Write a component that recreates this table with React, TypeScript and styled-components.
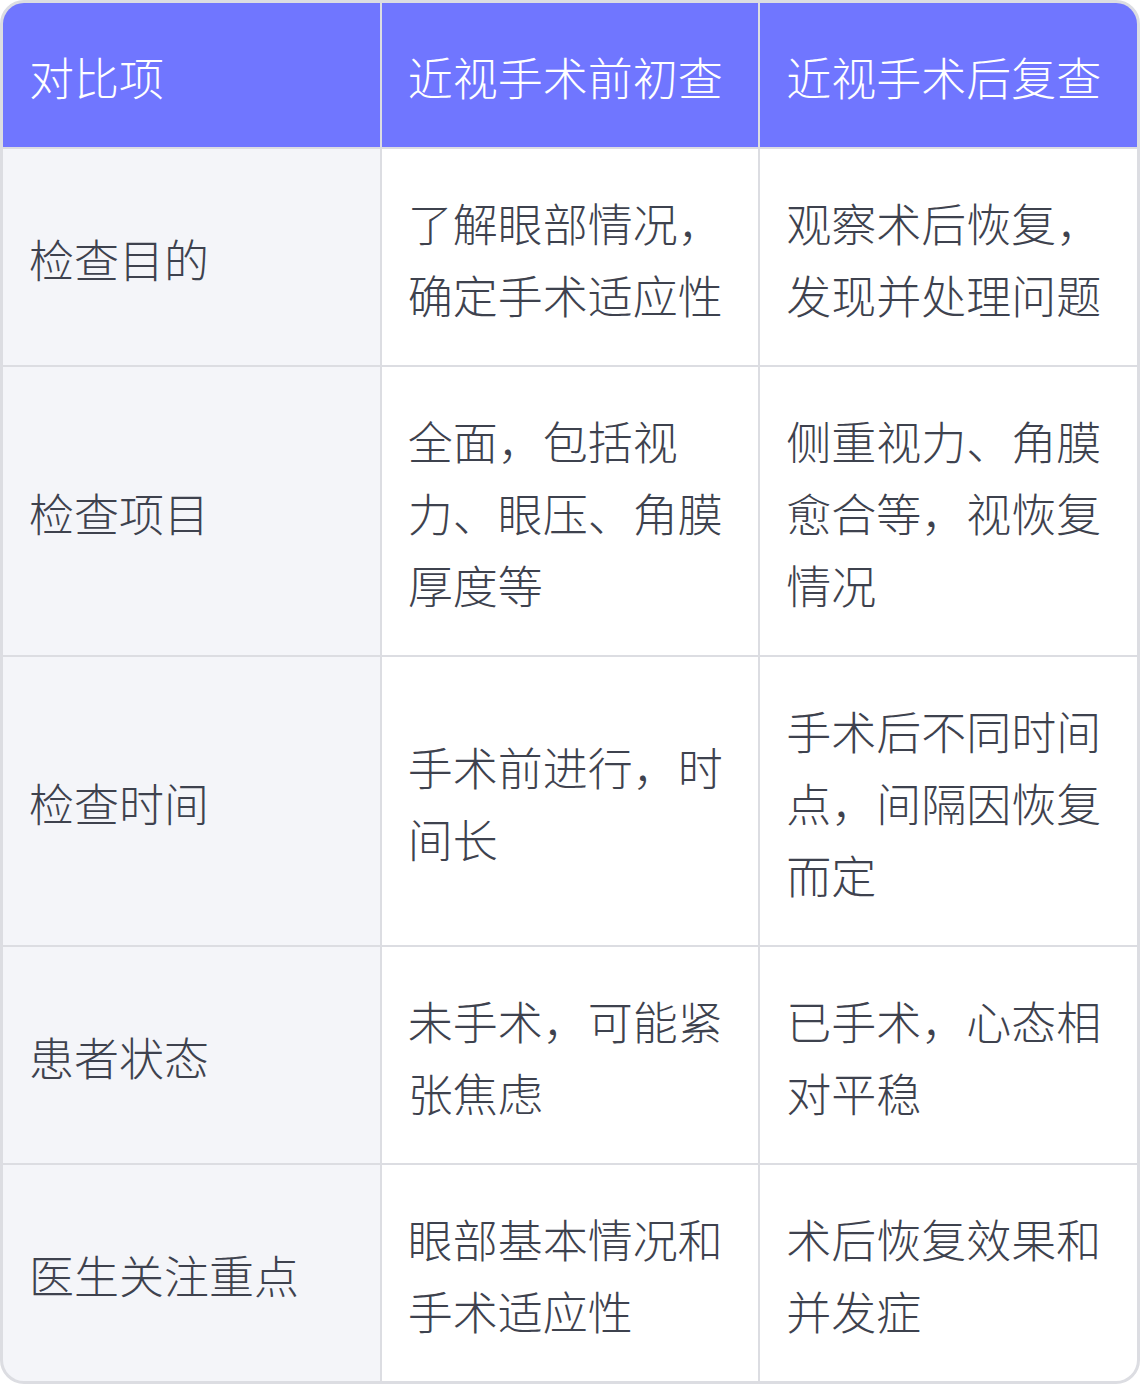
import styled, { createGlobalStyle } from 'styled-components'

const GlobalStyle = createGlobalStyle`
  html, body {
    margin: 0;
    padding: 0;
    background: #ffffff;
  }
  * {
    box-sizing: border-box;
  }
`

const rows = [
  ['检查目的', '了解眼部情况，确定手术适应性', '观察术后恢复，发现并处理问题'],
  ['检查项目', '全面，包括视力、眼压、角膜厚度等', '侧重视力、角膜愈合等，视恢复情况'],
  ['检查时间', '手术前进行，时间长', '手术后不同时间点，间隔因恢复而定'],
  ['患者状态', '未手术，可能紧张焦虑', '已手术，心态相对平稳'],
  ['医生关注重点', '眼部基本情况和手术适应性', '术后恢复效果和并发症'],
]

const headers = ['对比项', '近视手术前初查', '近视手术后复查']

export default function App () {
  return (
    <>
      <GlobalStyle />
      <Table>
        {headers.map(h => (
          <HeadCell key={h}>{h}</HeadCell>
        ))}
        {rows.map(row =>
          row.map((text, i) => (
            <Cell key={row[0] + i} $label={i === 0}>{text}</Cell>
          ))
        )}
      </Table>
    </>
  )
}

const Table = styled.div`
  display: grid;
  grid-template-columns: repeat(3, 1fr);
  gap: 2px;
  width: 1140px;
  background: #dcdde2;
  border: 3px solid #dcdde2;
  border-radius: 24px;
  overflow: hidden;
  font-family: 'Noto Sans CJK SC', 'Noto Sans', sans-serif;
  font-size: 45px;
  font-weight: 300;
  line-height: 72px;
`

const HeadCell = styled.div`
  display: flex;
  align-items: center;
  padding: 38px 28px 34px 26px;
  min-height: 144px;
  background: #7076ff;
  color: #ffffff;
`

const Cell = styled.div<{ $label?: boolean }>`
  display: flex;
  align-items: center;
  padding: 38px 28px 34px 26px;
  background: ${p => (p.$label ? '#f4f5f9' : '#ffffff')};
  color: #3e424e;
`
